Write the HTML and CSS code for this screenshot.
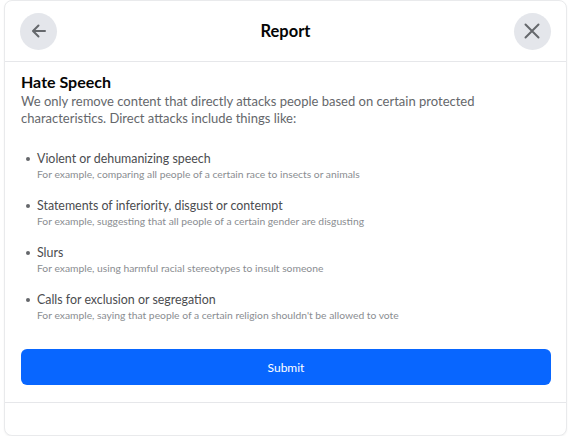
FILE: index.html
```html
<!DOCTYPE html>
<html>
<head>
<meta charset="utf-8">
<link rel="stylesheet" href="styles.css">
</head>
<body>
<div class="card">
  <div class="header">
    <button class="circle-btn" aria-label="Back">
      <svg width="20" height="20" viewBox="0 0 20 20"><path d="M16 10H4.5M9.5 4.5L4 10l5.5 5.5" fill="none" stroke="#65686c" stroke-width="2" stroke-linecap="round" stroke-linejoin="round"/></svg>
    </button>
    <div class="title">Report</div>
    <button class="circle-btn" aria-label="Close">
      <svg width="20" height="20" viewBox="0 0 20 20"><path d="M3.5 3.5l13 13M16.5 3.5l-13 13" fill="none" stroke="#65686c" stroke-width="2" stroke-linecap="round"/></svg>
    </button>
  </div>
  <div class="body">
    <h2 class="heading">Hate Speech</h2>
    <p class="intro">We only remove content that directly attacks people based on certain protected characteristics. Direct attacks include things like:</p>
    <ul class="list">
      <li class="item">
        <div class="item-title">Violent or dehumanizing speech</div>
        <div class="item-sub">For example, comparing all people of a certain race to insects or animals</div>
      </li>
      <li class="item">
        <div class="item-title">Statements of inferiority, disgust or contempt</div>
        <div class="item-sub">For example, suggesting that all people of a certain gender are disgusting</div>
      </li>
      <li class="item">
        <div class="item-title">Slurs</div>
        <div class="item-sub">For example, using harmful racial stereotypes to insult someone</div>
      </li>
      <li class="item">
        <div class="item-title">Calls for exclusion or segregation</div>
        <div class="item-sub">For example, saying that people of a certain religion shouldn't be allowed to vote</div>
      </li>
    </ul>
    <button class="submit">Submit</button>
  </div>
  <div class="footer"></div>
</div>
</body>
</html>
```
FILE: styles.css
```css
* { box-sizing: border-box; }
html, body { margin: 0; padding: 0; background: #ffffff; }
body {
  font-family: Lato, "Open Sans", sans-serif;
  color: #050505;
  padding: 0 4px;
}
.card {
  height: 436px;
  border: 1px solid #e9eaec;
  border-radius: 8px;
  box-shadow: 0 1px 2px rgba(0,0,0,0.05);
  display: flex;
  flex-direction: column;
  background: #fff;
}
.header {
  height: 61px;
  flex: none;
  display: flex;
  align-items: center;
  justify-content: space-between;
  padding: 0 15px;
  border-bottom: 1px solid #e6e7ea;
}
.circle-btn {
  width: 37px;
  height: 37px;
  border-radius: 50%;
  border: none;
  background: #e4e6eb;
  display: flex;
  align-items: center;
  justify-content: center;
  padding: 0;
}
.title {
  font-weight: 700;
  font-size: 16.5px;
  color: #050505;
}
.body {
  flex: 1;
  padding: 9px 15px 17px 16px;
  border-bottom: 1px solid #e6e7ea;
}
.heading {
  margin: 0;
  font-size: 16px;
  font-weight: 700;
  line-height: 22px;
  color: #050505;
}
.intro {
  margin: 0;
  font-size: 13px;
  line-height: 17px;
  color: #65676b;
}
.list {
  list-style: none;
  margin: 23px 0 0;
  padding: 0;
  display: flex;
  flex-direction: column;
  gap: 16px;
}
.item {
  position: relative;
  padding-left: 16px;
}
.item::before {
  content: "";
  position: absolute;
  left: 5px;
  top: 7px;
  width: 4px;
  height: 4px;
  border-radius: 50%;
  background: #65676b;
}
.item-title {
  font-size: 12.4px;
  line-height: 17px;
  color: #4b4c4f;
}
.item-sub {
  font-size: 10.3px;
  line-height: 14px;
  color: #8a8d91;
}
.submit {
  display: block;
  width: 100%;
  height: 36px;
  margin-top: 27px;
  border: none;
  border-radius: 6px;
  background: #0866ff;
  color: #fff;
  font-family: inherit;
  font-size: 12px;
}
.footer {
  height: 33px;
  flex: none;
}
```
